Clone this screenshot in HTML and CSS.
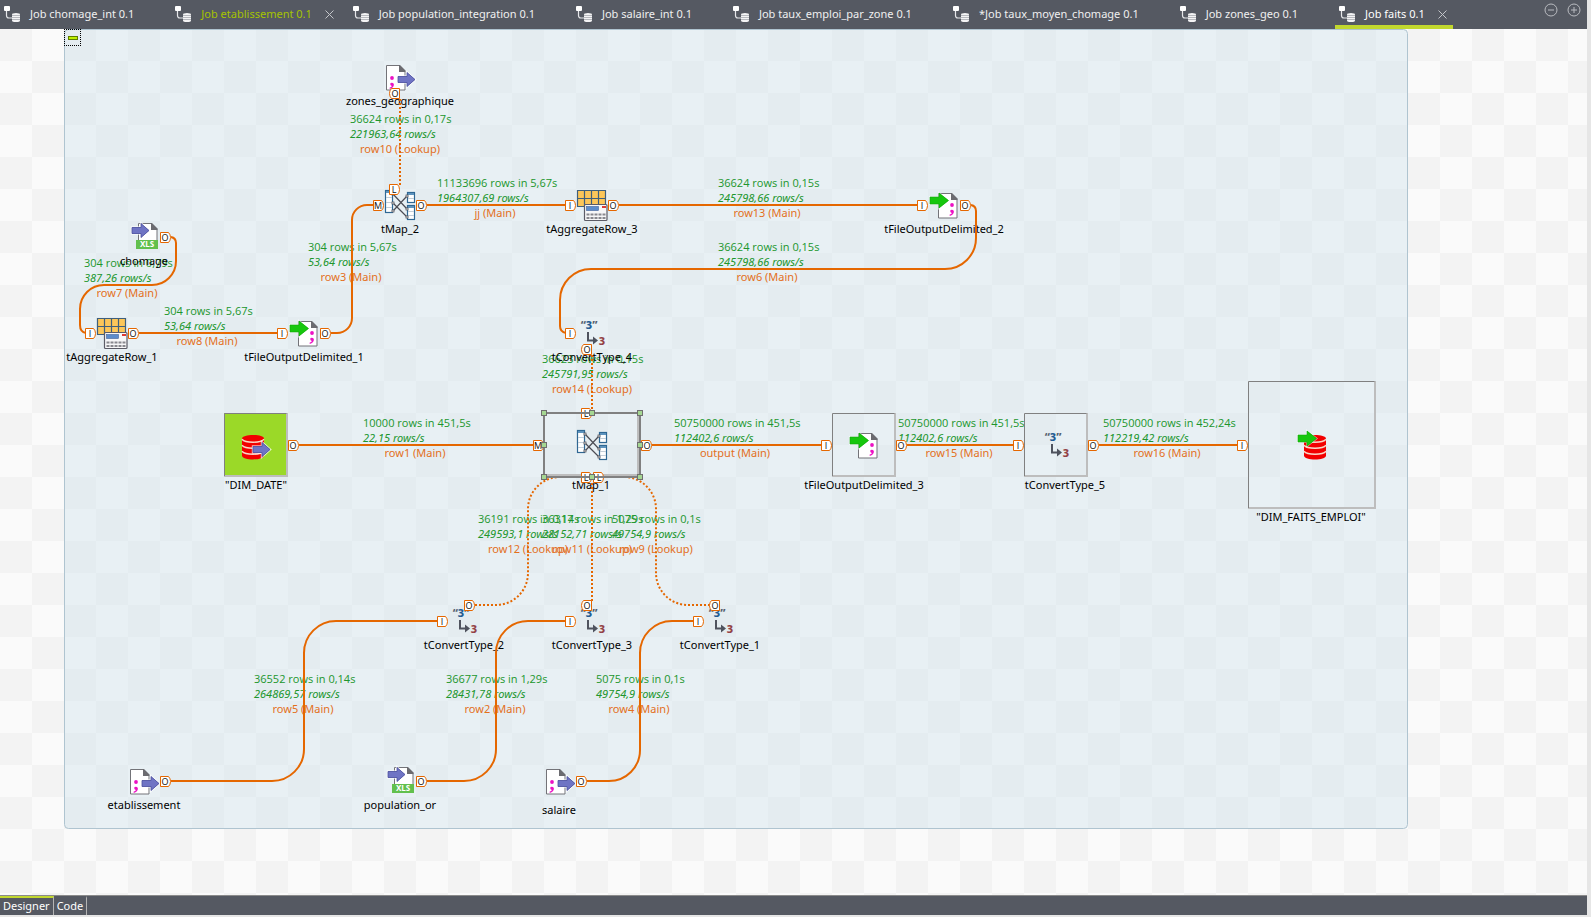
FILE: index.html
```html
<!DOCTYPE html>
<html lang="fr">
<head>
<meta charset="utf-8">
<title>Job faits 0.1</title>
<link rel="stylesheet" href="styles.css">
</head>
<body>
<svg class="defs" width="0" height="0" aria-hidden="true">
  <defs>
    <symbol id="job" viewBox="0 0 16 16">
      <rect x="0" y="0" width="6" height="5" rx="1" fill="#fff"/>
      <path d="M2.5 5v4.500q0 2.500 2.500 2.500h3" fill="none" stroke="#e6e7ea" stroke-width="1.200"/>
      <path d="M8 8.500q0-1.500 4-1.500t4 1.500v6q0 1.500-4 1.500t-4-1.500z" fill="#f4f4f5"/>
      <path d="M8 9.500h8M8 11.500h8M8 13.500h8" stroke="#8d9098" stroke-width=".6"/>
    </symbol>
    <symbol id="cross" viewBox="0 0 9 9">
      <path d="M.5 .5l8 8M8.500 .5l-8 8" fill="none" stroke="currentColor"/>
    </symbol>
    <g id="arrow-in">
      <path d="M0 4.500h9v-4l8 7-8 7v-4h-9z" fill="#6f74c4" stroke="#fff" stroke-width="2.400" stroke-opacity=".7" paint-order="stroke"/>
      <path d="M0 4.500h9v-4l8 7-8 7v-4h-9z" fill="#6f74c4" stroke="#4c509e" stroke-width=".8"/>
    </g>
    <g id="arrow-out">
      <path d="M0 4h9v-4l9.500 7.500-9.500 7.500v-4h-9z" fill="#17c70e" stroke="#fff" stroke-width="2" stroke-opacity=".5" paint-order="stroke"/>
      <path d="M0 4h9v-4l9.500 7.500-9.500 7.500v-4h-9z" fill="#17c70e" stroke="#11a80a" stroke-width=".6"/>
    </g>
    <g id="page">
      <path d="M.5 .5h13l5.500 5.500v19h-18.500z" fill="#fff" stroke="#737378"/>
      <path d="M13 0h1l5.500 5.500v1.500h-6.500z" fill="#6b6b70"/>
    </g>
    <g id="semi" fill="#ec12c4">
      <circle cx="3" cy="2" r="1.900"/>
      <path d="M1.200 8q0-1.300 1.800-1.300t1.900 1.900q0 3.400-4.200 4.400v-1.500q2-.6 2.100-1.600-1.600-.2-1.600-1.900z"/>
    </g>
    <g id="db">
      <path d="M0 3.500c0-4.700 22-4.700 22 0v17c0 5.300-22 5.300-22 0z" fill="#f20000"/>
      <path d="M0 4.200q2.500 3 11 3t11-3M0 10.200q2.500 3 11 3t11-3M0 16.200q2.500 3 11 3t11-3" fill="none" stroke="#f9d9c8" stroke-width="1.400"/>
    </g>
    <g id="i-xls">
      <use href="#page" x="10" y="2"/>
      <use href="#arrow-in" x="4" y="2"/>
      <rect x="8" y="19" width="22" height="9" fill="#62c04d"/>
      <text class="xls" x="19" y="26">XLS</text>
    </g>
    <g id="i-in">
      <use href="#page" x="2" y="4"/>
      <use href="#semi" x="5" y="15"/>
      <use href="#arrow-in" x="14" y="11"/>
    </g>
    <g id="i-out">
      <use href="#page" x="10" y="4"/>
      <use href="#semi" x="21" y="14"/>
      <use href="#arrow-out" x="2" y="4"/>
    </g>
    <g id="i-agg">
      <rect x="1.500" y="1.500" width="28" height="16" fill="#fcc659"/>
      <path d="M1.500 1.500h28v16h-28zM8.500 1.500v16M15.500 1.500v16M22.500 1.500v16M1.500 9.500h28" fill="none" stroke="#3f5f7c" stroke-width="1.200"/>
      <rect x="8.500" y="15.500" width="22.500" height="16" rx="1" fill="#f7f7f8" stroke="#5b5b66" stroke-width="1.200"/>
      <rect x="10.500" y="17.500" width="12" height="4" fill="#5c8ccb" stroke="#41639a" stroke-width=".6"/>
      <rect x="26" y="17" width="4" height="2" fill="#dd3b33"/>
      <path d="M10.500 25.500h19M10.500 29h19" stroke="#88888e" stroke-width="2" stroke-dasharray="3 1"/>
    </g>
    <g id="i-map">
      <path d="M9 5l14 15M9 14l14 14M9 22l14-15" fill="none" stroke="#4c4c54" stroke-width="1.200"/>
      <g fill="#fff" stroke="#2f6793" stroke-width="1.200">
        <rect x="1.500" y="1.500" width="7" height="22"/>
        <rect x="23.500" y="3.500" width="7" height="10"/>
        <rect x="23.500" y="16.500" width="7" height="14"/>
      </g>
      <path d="M2 3h6M24 5h6M24 18h6" stroke="#5d93bd" stroke-width="2"/>
      <path d="M2 8.500h6M2 13.500h6M2 18.500h6M24 9.500h6M24 22.500h6M24 26.500h6" stroke="#c3ced8"/>
      <g fill="#fff" stroke="#55555c" stroke-width=".8">
        <rect x="8" y="4" width="2" height="2"/><rect x="8" y="13" width="2" height="2"/><rect x="8" y="21" width="2" height="2"/>
        <rect x="22" y="6" width="2" height="2"/><rect x="22" y="19" width="2" height="2"/><rect x="22" y="27" width="2" height="2"/>
      </g>
    </g>
    <g id="i-conv">
      <text class="conv" x="13" y="12"><tspan fill="#55606e">“</tspan><tspan fill="#235c92">3</tspan><tspan fill="#55606e">”</tspan></text>
      <path d="M12 15v8.500h6" fill="none" stroke="#4f535e" stroke-width="2"/>
      <path d="M17 19.500l5 4-5 4z" fill="#4f535e"/>
      <text class="conv" x="26" y="28" fill="#934246">3</text>
    </g>
    <g id="i-dbin">
      <use href="#db" x="2" y="6"/>
      <use href="#arrow-in" x="13" y="13"/>
    </g>
    <g id="i-dbout">
      <use href="#db" x="8" y="6"/>
      <use href="#arrow-out" x="2" y="2"/>
    </g>
    <path id="pr" d="M.5 .5h8q2 2 2 5t-2 5h-8z"/>
    <path id="pl" d="M10.500 .5h-8q-2 2-2 5t2 5h8z"/>
    <rect id="h" x="-2.500" y="-2.500" width="5" height="5"/>
  </defs>
</svg>

<header class="tabs">
  <div class="tab"><button class="tab-name"><svg class="job"><use href="#job"/></svg>Job chomage_int 0.1</button><span class="slot"></span></div>
  <div class="tab modified"><button class="tab-name"><svg class="job"><use href="#job"/></svg>Job etablissement 0.1</button><button class="slot" aria-label="Fermer"><svg class="cross"><use href="#cross"/></svg></button></div>
  <div class="tab"><button class="tab-name"><svg class="job"><use href="#job"/></svg>Job population_integration 0.1</button><span class="slot"></span></div>
  <div class="tab"><button class="tab-name"><svg class="job"><use href="#job"/></svg>Job salaire_int 0.1</button><span class="slot"></span></div>
  <div class="tab"><button class="tab-name"><svg class="job"><use href="#job"/></svg>Job taux_emploi_par_zone 0.1</button><span class="slot"></span></div>
  <div class="tab"><button class="tab-name"><svg class="job"><use href="#job"/></svg>*Job taux_moyen_chomage 0.1</button><span class="slot"></span></div>
  <div class="tab"><button class="tab-name"><svg class="job"><use href="#job"/></svg>Job zones_geo 0.1</button><span class="slot"></span></div>
  <div class="tab active"><button class="tab-name"><svg class="job"><use href="#job"/></svg>Job faits 0.1</button><button class="slot" aria-label="Fermer"><svg class="cross"><use href="#cross"/></svg></button></div>
  <div class="tools">
    <button class="tool" aria-label="Réduire"><svg viewBox="0 0 14 14"><circle cx="7" cy="7" r="6"/><path d="M4 7h6"/></svg></button>
    <button class="tool" aria-label="Agrandir"><svg viewBox="0 0 14 14"><circle cx="7" cy="7" r="6"/><path d="M4 7h6M7 4v6"/></svg></button>
  </div>
</header>

<main class="canvas">
  <svg class="diagram" role="img" aria-label="Job faits">
    <g transform="translate(0 -29)">
      <rect class="subjob" x="64.500" y="29.500" width="1343" height="799" rx="4"/>

      <g class="stats">
        <text x="84" y="267">304 rows in 0,79s</text><text class="rate" x="84" y="282">387,26 rows/s</text><text class="row" x="127" y="297">row7 (Main)</text>
        <text x="164" y="315">304 rows in 5,67s</text><text class="rate" x="164" y="330">53,64 rows/s</text><text class="row" x="207" y="345">row8 (Main)</text>
        <text x="308" y="251">304 rows in 5,67s</text><text class="rate" x="308" y="266">53,64 rows/s</text><text class="row" x="351" y="281">row3 (Main)</text>
        <text x="350" y="123">36624 rows in 0,17s</text><text class="rate" x="350" y="138">221963,64 rows/s</text><text class="row" x="400" y="153">row10 (Lookup)</text>
        <text x="437" y="187">11133696 rows in 5,67s</text><text class="rate" x="437" y="202">1964307,69 rows/s</text><text class="row" x="495" y="217">jj (Main)</text>
        <text x="718" y="187">36624 rows in 0,15s</text><text class="rate" x="718" y="202">245798,66 rows/s</text><text class="row" x="767" y="217">row13 (Main)</text>
        <text x="718" y="251">36624 rows in 0,15s</text><text class="rate" x="718" y="266">245798,66 rows/s</text><text class="row" x="767" y="281">row6 (Main)</text>
        <text x="542" y="363">36623 rows in 0,15s</text><text class="rate" x="542" y="378">245791,95 rows/s</text><text class="row" x="592" y="393">row14 (Lookup)</text>
        <text x="363" y="427">10000 rows in 451,5s</text><text class="rate" x="363" y="442">22,15 rows/s</text><text class="row" x="415" y="457">row1 (Main)</text>
        <text x="674" y="427">50750000 rows in 451,5s</text><text class="rate" x="674" y="442">112402,6 rows/s</text><text class="row" x="735" y="457">output (Main)</text>
        <text x="898" y="427">50750000 rows in 451,5s</text><text class="rate" x="898" y="442">112402,6 rows/s</text><text class="row" x="959" y="457">row15 (Main)</text>
        <text x="1103" y="427">50750000 rows in 452,24s</text><text class="rate" x="1103" y="442">112219,42 rows/s</text><text class="row" x="1167" y="457">row16 (Main)</text>
        <text x="478" y="523">36191 rows in 0,14s</text><text class="rate" x="478" y="538">249593,1 rows/s</text><text class="row" x="528" y="553">row12 (Lookup)</text>
        <text x="542" y="523">36317 rows in 1,29s</text><text class="rate" x="542" y="538">28152,71 rows/s</text><text class="row" x="592" y="553">row11 (Lookup)</text>
        <text x="612" y="523">5075 rows in 0,1s</text><text class="rate" x="612" y="538">49754,9 rows/s</text><text class="row" x="656" y="553">row9 (Lookup)</text>
        <text x="254" y="683">36552 rows in 0,14s</text><text class="rate" x="254" y="698">264869,57 rows/s</text><text class="row" x="303" y="713">row5 (Main)</text>
        <text x="446" y="683">36677 rows in 1,29s</text><text class="rate" x="446" y="698">28431,78 rows/s</text><text class="row" x="495" y="713">row2 (Main)</text>
        <text x="596" y="683">5075 rows in 0,1s</text><text class="rate" x="596" y="698">49754,9 rows/s</text><text class="row" x="639" y="713">row4 (Main)</text>
      </g>

      <g class="boxes">
        <rect x="224" y="413" width="64" height="64" fill="#9bd928"/>
        <path class="lit" d="M287 413v63h-63"/><path class="dim" d="M224.500 476v-62.500h62"/>
        <path class="lit" d="M895 413v63h-63"/><path class="dim" d="M832.500 476v-62.500h62"/>
        <path class="lit" d="M1087 413v63h-63"/><path class="dim" d="M1024.500 476v-62.500h62"/>
        <path class="lit" d="M1375 381v127h-127"/><path class="dim" d="M1248.500 508v-126.500h126"/>
        <path class="lit" d="M638 414v61h-93"/>
      </g>

      <g class="names">
        <text x="400" y="105">zones_geographique</text>
        <text x="400" y="233">tMap_2</text>
        <text x="592" y="233">tAggregateRow_3</text>
        <text x="944" y="233">tFileOutputDelimited_2</text>
        <text x="144" y="265">chomage</text>
        <text x="112" y="361">tAggregateRow_1</text>
        <text x="304" y="361">tFileOutputDelimited_1</text>
        <text x="592" y="361">tConvertType_4</text>
        <text x="256" y="489">"DIM_DATE"</text>
        <text x="591" y="489">tMap_1</text>
        <text x="864" y="489">tFileOutputDelimited_3</text>
        <text x="1065" y="489">tConvertType_5</text>
        <text x="1311" y="521">"DIM_FAITS_EMPLOI"</text>
        <text x="464" y="649">tConvertType_2</text>
        <text x="592" y="649">tConvertType_3</text>
        <text x="720" y="649">tConvertType_1</text>
        <text x="144" y="809">etablissement</text>
        <text x="400" y="809">population_or</text>
        <text x="559" y="814">salaire</text>
      </g>

      <use href="#i-in" x="384" y="61"/>
      <use href="#i-map" x="384" y="189"/>
      <use href="#i-agg" x="576" y="189"/>
      <use href="#i-out" x="928" y="189"/>
      <use href="#i-xls" x="128" y="221"/>
      <use href="#i-agg" x="96" y="317"/>
      <use href="#i-out" x="288" y="317"/>
      <use href="#i-conv" x="576" y="317"/>
      <use href="#i-dbin" x="240" y="429"/>
      <use href="#i-map" x="576" y="429"/>
      <use href="#i-out" x="848" y="429"/>
      <use href="#i-conv" x="1040" y="429"/>
      <use href="#i-dbout" x="1296" y="429"/>
      <use href="#i-conv" x="448" y="605"/>
      <use href="#i-conv" x="576" y="605"/>
      <use href="#i-conv" x="704" y="605"/>
      <use href="#i-in" x="128" y="765"/>
      <use href="#i-xls" x="384" y="765"/>
      <use href="#i-in" x="544" y="765"/>

      <g class="links">
        <path d="M171 237q5 1 5 6v18a24 24 0 0 1-24 24h-48a24 24 0 0 0-24 24v16q0 7 6 8"/>
        <path d="M139 333h139"/>
        <path d="M331 333h6a15 15 0 0 0 15-15v-98a15 15 0 0 1 15-15h7"/>
        <path d="M427 205h139M619 205h299"/>
        <path d="M971 205q5 1 5 6v27a31 31 0 0 1-31 31h-354a31 31 0 0 0-31 31v26q0 6 6 7"/>
        <path d="M299 445h235M652 445h170M907 445h107M1099 445h139"/>
        <path d="M171 781h101a32 32 0 0 0 32-32v-96a32 32 0 0 1 32-32h102"/>
        <path d="M427 781h37a32 32 0 0 0 32-32v-96a32 32 0 0 1 32-32h38"/>
        <path d="M587 781h22a31 31 0 0 0 31-31v-97a32 32 0 0 1 32-32h22"/>
      </g>
      <g class="links lookup">
        <path d="M400 99v86"/>
        <path d="M592 355v54"/>
        <path d="M592 483v118"/>
        <path d="M475 605h21a32 32 0 0 0 32-32v-64a32 32 0 0 1 32-32h22"/>
        <path d="M710 605h-22a32 32 0 0 1-32-32v-64a32 32 0 0 0-32-32h-19"/>
      </g>

      <g class="ports">
        <use href="#pl" x="389" y="88"/><text x="395" y="97">O</text>
        <use href="#pr" x="389" y="184"/><text x="394" y="193">L</text>
        <use href="#pr" x="373" y="200"/><text x="378" y="209">M</text>
        <use href="#pr" x="416" y="200"/><text x="421" y="209">O</text>
        <use href="#pr" x="565" y="200"/><text x="570" y="209">I</text>
        <use href="#pr" x="608" y="200"/><text x="613" y="209">O</text>
        <use href="#pr" x="917" y="200"/><text x="922" y="209">I</text>
        <use href="#pr" x="960" y="200"/><text x="965" y="209">O</text>
        <use href="#pr" x="160" y="232"/><text x="165" y="241">O</text>
        <use href="#pr" x="85" y="328"/><text x="90" y="337">I</text>
        <use href="#pr" x="128" y="328"/><text x="133" y="337">O</text>
        <use href="#pr" x="277" y="328"/><text x="282" y="337">I</text>
        <use href="#pr" x="320" y="328"/><text x="325" y="337">O</text>
        <use href="#pr" x="565" y="328"/><text x="570" y="337">I</text>
        <use href="#pl" x="581" y="344"/><text x="587" y="353">O</text>
        <use href="#pr" x="581" y="408"/><text x="586" y="417">L</text>
        <use href="#pr" x="533" y="440"/><text x="538" y="449">M</text>
        <use href="#pr" x="641" y="440"/><text x="647" y="449">O</text>
        <use href="#pr" x="581" y="472"/><text x="586" y="481">L</text>
        <use href="#pr" x="593" y="472"/><text x="599" y="481">L</text>
        <use href="#pr" x="288" y="440"/><text x="293" y="449">O</text>
        <use href="#pr" x="821" y="440"/><text x="826" y="449">I</text>
        <use href="#pr" x="896" y="440"/><text x="901" y="449">O</text>
        <use href="#pr" x="1013" y="440"/><text x="1018" y="449">I</text>
        <use href="#pr" x="1088" y="440"/><text x="1093" y="449">O</text>
        <use href="#pr" x="1237" y="440"/><text x="1242" y="449">I</text>
        <use href="#pr" x="464" y="600"/><text x="469" y="609">O</text>
        <use href="#pl" x="581" y="600"/><text x="587" y="609">O</text>
        <use href="#pl" x="709" y="600"/><text x="715" y="609">O</text>
        <use href="#pr" x="437" y="616"/><text x="442" y="625">I</text>
        <use href="#pr" x="565" y="616"/><text x="570" y="625">I</text>
        <use href="#pr" x="693" y="616"/><text x="698" y="625">I</text>
        <use href="#pr" x="160" y="776"/><text x="165" y="785">O</text>
        <use href="#pr" x="416" y="776"/><text x="421" y="785">O</text>
        <use href="#pr" x="576" y="776"/><text x="581" y="785">O</text>
      </g>

      <g class="selection">
        <path d="M544 477v-64h96M640 413v64M544 477h96"/>
        <use href="#h" x="544" y="413"/><use href="#h" x="592" y="413"/><use href="#h" x="640" y="413"/>
        <use href="#h" x="544" y="445"/><use href="#h" x="640" y="445"/>
        <use href="#h" x="544" y="477"/><use href="#h" x="592" y="477"/><use href="#h" x="640" y="477"/>
      </g>
    </g>
  </svg>
  <button class="collapse" aria-label="Replier le sous-job"><span class="dash"></span></button>
</main>

<footer class="views">
  <button class="view active">Designer</button>
  <button class="view">Code</button>
</footer>
</body>
</html>
```
FILE: styles.css
```css
* {
  box-sizing: border-box;
}

body {
  margin: 0;
  min-height: 100vh;
  display: flex;
  flex-direction: column;
  padding: 0 4px 2px 0;
  background: #e6e6e6;
  font-family: "Noto Sans", "Open Sans", sans-serif;
  font-size: 11px;
}

button {
  margin: 0;
  padding: 0;
  border: 0;
  background: none;
  color: inherit;
  font: inherit;
}

.defs {
  position: absolute;
}

/* Editor tabs */
.tabs {
  display: flex;
  gap: 9px;
  height: 29px;
  background: #555962;
  color: #f0f0f0;
}

.tab {
  display: flex;
  flex: none;
  border-bottom: 4px solid transparent;
}

.tab-name {
  display: flex;
  align-items: center;
  gap: 10px;
  padding: 2px 0 0 4px;
  white-space: nowrap;
}

.job {
  width: 16px;
  height: 16px;
}

.slot {
  display: flex;
  align-items: center;
  width: 28px;
  padding: 4px 0 0 13px;
  color: #c4c6ca;
}

.cross {
  width: 9px;
  height: 9px;
}

.tab.modified .tab-name {
  color: #a5c400;
}

.tab.active {
  border-bottom-color: #c1d72e;
  color: #fff;
}

.tools {
  display: flex;
  align-items: flex-start;
  gap: 9px;
  margin-left: auto;
  padding: 3px 6px 0 0;
}

.tool {
  width: 14px;
  height: 14px;
}

.tool svg {
  display: block;
  fill: none;
  stroke: #b9bbc0;
}

/* Designer canvas */
.canvas {
  position: relative;
  flex: 1;
  display: flex;
  background: conic-gradient(#fafafa 25%, #f3f3f3 0 50%, #fafafa 0 75%, #f3f3f3 0) 0 0 / 64px 64px;
}

.diagram {
  flex: 1;
  min-width: 0;
  overflow: hidden;
}

.subjob {
  fill: rgba(210, 228, 237, .45);
  stroke: #afc4d0;
}

.stats {
  fill: #20962c;
  font-family: "Open Sans", "Noto Sans", sans-serif;
}

.rate {
  font-style: italic;
  font-size: 11px;
}

.row {
  fill: #e36f1c;
  font-family: "Noto Sans", "Open Sans", sans-serif;
  text-anchor: middle;
}

.rate {
  font-family: "Noto Sans", "Open Sans", sans-serif;
}

.names {
  fill: #000;
  text-anchor: middle;
}

.boxes path {
  fill: none;
}

.boxes .lit {
  stroke: #bdbdbd;
  stroke-width: 2;
}

.boxes .dim {
  stroke: #808080;
}

.links {
  fill: none;
  stroke: #e56700;
  stroke-width: 2;
}

.lookup {
  stroke-dasharray: 2 2;
}

.ports {
  fill: #fff;
  stroke: #e56700;
}

.ports text {
  fill: #111;
  stroke: none;
  font-family: "Open Sans", sans-serif;
  font-size: 9px;
  text-anchor: middle;
}

.selection {
  fill: #a5d792;
  stroke: #6f6f6f;
}

.selection path {
  fill: none;
  stroke: #808080;
  stroke-width: 2;
}

.xls {
  fill: #fff;
  font-size: 8px;
  font-weight: 700;
  text-anchor: middle;
}

.conv {
  font-size: 11px;
  font-weight: 800;
  text-anchor: middle;
}

.collapse {
  position: absolute;
  left: 64px;
  top: 0;
  display: grid;
  place-items: center;
  width: 17px;
  height: 17px;
  border: 1px dotted #000;
}

.dash {
  width: 10px;
  height: 4px;
  border: 1px solid #5d7d00;
  background: #bdf000;
}

/* Designer / Code views */
.views {
  display: flex;
  height: 20px;
  border-top: 1px solid #8b8b8b;
  background: #555962;
  color: #fff;
}

.view {
  padding: 0 3px 2px;
  border-top: 2px solid transparent;
  border-right: 1px solid #b4b4b4;
  line-height: 14px;
}

.view.active {
  border-top-color: #c1d72e;
}
```
